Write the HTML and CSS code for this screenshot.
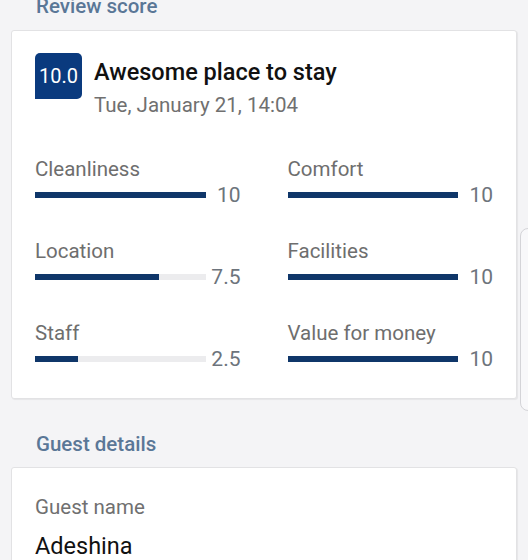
FILE: index.html
```html
<!DOCTYPE html>
<html lang="en">
<head>
  <meta charset="UTF-8" />
  <meta name="viewport" content="width=device-width, initial-scale=1.0"/>
  <title>Review</title>
  <link rel="stylesheet" href="styles.css">
</head>
<body>
  <h2 class="section-title first">Review score</h2>
  <div class="card review">
    <div class="review-head">
      <div class="score-badge">10.0</div>
      <div class="review-text">
        <div class="review-title">Awesome place to stay</div>
        <div class="review-date">Tue, January 21, 14:04</div>
      </div>
    </div>

    <div class="scores">
      <div class="score">
        <div class="score-label">Cleanliness</div>
        <div class="score-row">
          <div class="bar"><div class="bar-fill" style="width:100%"></div></div>
          <span class="score-value">10</span>
        </div>
      </div>
      <div class="score">
        <div class="score-label">Comfort</div>
        <div class="score-row">
          <div class="bar"><div class="bar-fill" style="width:100%"></div></div>
          <span class="score-value">10</span>
        </div>
      </div>
      <div class="score">
        <div class="score-label">Location</div>
        <div class="score-row">
          <div class="bar"><div class="bar-fill" style="width:73%"></div></div>
          <span class="score-value">7.5</span>
        </div>
      </div>
      <div class="score">
        <div class="score-label">Facilities</div>
        <div class="score-row">
          <div class="bar"><div class="bar-fill" style="width:100%"></div></div>
          <span class="score-value">10</span>
        </div>
      </div>
      <div class="score">
        <div class="score-label">Staff</div>
        <div class="score-row">
          <div class="bar"><div class="bar-fill" style="width:25%"></div></div>
          <span class="score-value">2.5</span>
        </div>
      </div>
      <div class="score">
        <div class="score-label">Value for money</div>
        <div class="score-row">
          <div class="bar"><div class="bar-fill" style="width:100%"></div></div>
          <span class="score-value">10</span>
        </div>
      </div>
    </div>
  </div>

  <h2 class="section-title">Guest details</h2>
  <div class="card guest">
    <div class="field-label">Guest name</div>
    <div class="field-value">Adeshina</div>
  </div>

  <!-- side handle peeking in from the right edge -->
  <div class="side-handle"></div>
</body>
</html>
```

FILE: styles.css
```css
body {
  margin: 0;
  padding: 0 11px;
  background-color: #f4f4f6;
  font-family: Roboto, "Noto Sans", Arial, sans-serif;
  overflow: hidden;
  height: 560px;
  position: relative;
}

.section-title {
  margin: 33px 0 11px 25px;
  font-size: 20.5px;
  line-height: 24px;
  font-weight: 500;
  color: #5a7797;
}

.section-title.first {
  margin-top: -6px;
  margin-bottom: 12px;
}

.card {
  background-color: #fff;
  border: 1px solid #e2e2e4;
  border-radius: 3px;
  box-shadow: 1px 1px 1px rgba(0, 0, 0, 0.06);
}

.review {
  padding: 22px 23px 27px 23px;
}

.review-head {
  display: flex;
  gap: 12px;
}

.score-badge {
  width: 47px;
  height: 46px;
  background-color: #0a3a7e;
  color: #fff;
  border-radius: 5px 5px 5px 0;
  display: flex;
  align-items: center;
  justify-content: center;
  font-size: 20px;
}

.review-text {
  margin-top: 5px;
}

.review-title {
  font-size: 23.5px;
  line-height: 28px;
  font-weight: 500;
  color: #111;
}

.review-date {
  margin-top: 7px;
  font-size: 20.5px;
  line-height: 24px;
  color: #707070;
}

.scores {
  margin-top: 40px;
  display: grid;
  grid-template-columns: 1fr 1fr;
  column-gap: 47px;
  row-gap: 32px;
}

.score-label {
  font-size: 20.5px;
  line-height: 24px;
  color: #6e6e6e;
}

.score-row {
  margin-top: 2px;
  height: 24px;
  display: flex;
  align-items: center;
}

.bar {
  flex: 1;
  height: 6px;
  background-color: #ececee;
}

.bar-fill {
  height: 100%;
  background-color: #0f3669;
}

.score-value {
  width: 35px;
  text-align: right;
  font-size: 21px;
  color: #6d747c;
}

.guest {
  padding: 27px 23px 20px 23px;
}

.field-label {
  font-size: 20.5px;
  line-height: 24px;
  color: #707070;
}

.field-value {
  margin-top: 13px;
  font-size: 23.5px;
  line-height: 28px;
  color: #111;
}

.side-handle {
  position: absolute;
  left: 520px;
  top: 228px;
  width: 30px;
  height: 181px;
  border: 1px solid #d4d4d8;
  border-radius: 8px;
  background-color: #f8f8fa;
}
```
